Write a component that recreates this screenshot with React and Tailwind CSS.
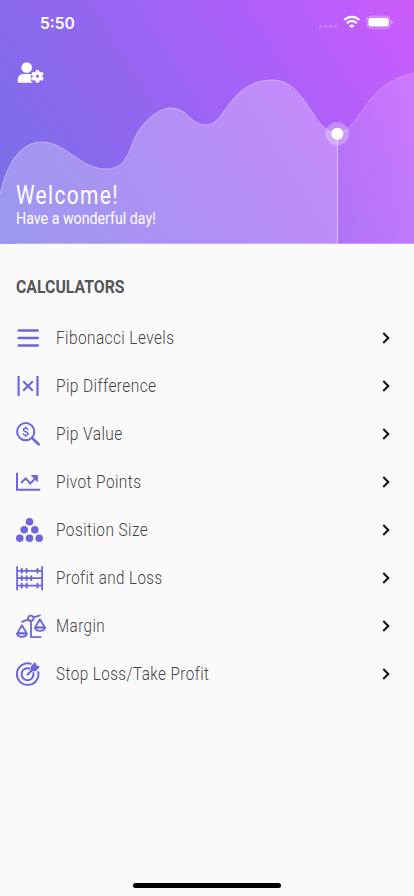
import React from "react";

const Icon = ({ children }) => (
  <svg viewBox="0 0 32 32" className="h-8 w-8 shrink-0" fill="none" stroke="#6C66DA" strokeWidth="2" strokeLinecap="round" strokeLinejoin="round">
    {children}
  </svg>
);

const Levels = () => (
  <Icon><path d="M2.6 8.5h19.2M2.6 16h19.2M2.6 23.5h19.2" strokeWidth="2.4" /></Icon>
);

const Difference = () => (
  <Icon><path d="M2.6 6v20M21.5 6v20M7.2 11.3l9.6 9.4M16.8 11.3l-9.6 9.4" strokeLinecap="butt" strokeWidth="2.2" /></Icon>
);

const Value = () => (
  <Icon>
    <circle cx="9.7" cy="13.7" r="8.6" />
    <path d="M16.3 20.2l6.4 6.2" strokeWidth="2.7" />
    <path d="M12 11.5c-.5-1-1.2-1.3-2.3-1.3-1.3 0-2.2.6-2.2 1.7 0 2.5 4.6 1.2 4.6 3.7 0 1.1-1 1.7-2.3 1.7-1.2 0-2.1-.5-2.5-1.5M9.7 8.9v1.3M9.7 17.3v1.3" strokeWidth="1.4" />
  </Icon>
);

const Pivot = () => (
  <Icon>
    <path d="M1 7.5v16.2h22.5" strokeLinejoin="miter" />
    <path d="M5.7 16.2l4-3.8 4.5 5.1 6-6" strokeLinejoin="miter" />
    <path d="M15.8 9.5h5.6v5.7z" fill="#6C66DA" strokeWidth="1" />
  </Icon>
);

const Position = () => (
  <Icon>
    <g fill="#6C66DA" stroke="none">
      <circle cx="13.5" cy="7.8" r="3.8" />
      <circle cx="8.2" cy="15.7" r="3.8" />
      <circle cx="18.8" cy="15.7" r="3.8" />
      <circle cx="3.8" cy="24.3" r="3.8" />
      <circle cx="13.5" cy="24.3" r="3.8" />
      <circle cx="23.2" cy="24.3" r="3.8" />
    </g>
  </Icon>
);

const Abacus = () => (
  <Icon>
    <path d="M1.1 5v22.6M26.1 5v22.6M1 8.8h25M1 16.2h25M1 23.7h25" strokeWidth="1.8" />
    <path d="M5.8 7v3.6M10.6 7v3.6M21.5 7v3.6M5.8 14.4V18M10.6 14.4V18M15.2 14.4V18M5.8 21.9v3.6M10.6 21.9v3.6M21.5 21.9v3.6" strokeWidth="2.1" />
  </Icon>
);

const Scales = () => (
  <Icon>
    <g strokeWidth="1.8">
      <circle cx="14.8" cy="8.3" r="2.7" />
      <path d="M6 11.8l6.2-2.4M17.4 7.3l6.5-2M15 11v16.2h9.7" />
      <path d="M5.9 15.2L1.4 23.1h9.2zM23.8 9.3l-4.5 8h9.4z" />
      <path d="M1 23.6c.6 4.2 9.3 4.2 9.9 0zM19 17.7c.6 4.2 9.4 4.2 10 0z" />
    </g>
  </Icon>
);

const Target = () => (
  <Icon>
    <path d="M14.7 5.7A10.8 10.8 0 1 0 22.3 14" />
    <path d="M13.7 10.6A6 6 0 1 0 17.4 14.9" />
    <path d="M11.6 16.5l6-6" strokeWidth="2.3" />
    <path d="M15.8 12.2V8.7l3.2-3.2.8 2.7 2.6.8-3.1 3.2z" fill="#6C66DA" />
  </Icon>
);

const rows = [
  { label: "Fibonacci Levels", icon: Levels, width: 118 },
  { label: "Pip Difference", icon: Difference, width: 100.5 },
  { label: "Pip Value", icon: Value, width: 67 },
  { label: "Pivot Points", icon: Pivot, width: 85.5 },
  { label: "Position Size", icon: Position, width: 92.5 },
  { label: "Profit and Loss", icon: Abacus, width: 107 },
  { label: "Margin", icon: Scales, width: 49 },
  { label: "Stop Loss/Take Profit", icon: Target, width: 153.5 },
];

// Narrows the regular Roboto face so the text fills the given width.
function Condensed({ width, className, children }) {
  const ref = React.useRef(null);
  const [scale, setScale] = React.useState(0.87);
  React.useLayoutEffect(() => {
    const fit = () => ref.current && setScale(width / ref.current.offsetWidth);
    fit();
    document.fonts.ready.then(fit);
  }, [width]);
  return (
    <span ref={ref} className={"inline-block origin-left whitespace-nowrap " + className} style={{ transform: `scaleX(${scale})` }}>
      {children}
    </span>
  );
}

const wave = "M0 195C7 161 22 142 42 142C66 142 80 169 106 169C131 169 128 143 142 126C152 114 162 108 171 108C188 108 190 125 206 125C226 125 229 80 273 80C306 80 313 133 337 133";
const tail = "M337 133C360 133 363 83 414 73";

function Header() {
  return (
    <header className="relative flex h-[244px] flex-col overflow-hidden bg-[linear-gradient(58deg,#7672e8_0%,#8d68ee_32%,#ab60f8_67%,#cc5bfc_100%)] text-white">
      <svg viewBox="0 0 414 244" className="absolute inset-0 h-full w-full" fill="none">
        <defs>
          <linearGradient id="shade" x1="337" x2="414" y1="0" y2="0" gradientUnits="userSpaceOnUse">
            <stop stopColor="#fff" stopOpacity=".11" />
            <stop offset="1" stopColor="#fff" stopOpacity=".17" />
          </linearGradient>
        </defs>
        <path d={wave + "V244H0Z"} fill="#fff" fillOpacity=".28" />
        <path d={tail + "V244H337Z"} fill="url(#shade)" />
        <path d={wave} stroke="#fff" strokeOpacity=".4" />
        <path d={tail} stroke="#fff" strokeOpacity=".28" />
        <path d="M337.5 134v110" stroke="#fff" strokeOpacity=".55" />
        <path d="M16 243.5h398" stroke="#fff" strokeOpacity=".25" />
        <circle cx="337.3" cy="133.8" r="11.7" fill="#fff" fillOpacity=".28" />
        <circle cx="337.3" cy="133.8" r="6.1" fill="#fff" />
      </svg>
      <div className="relative flex h-[46px] items-center justify-between pl-10 pr-5">
        <Condensed width={35} className="font-['Inter'] text-base font-semibold leading-none">5:50</Condensed>
        <svg viewBox="0 0 76 16" className="h-4 w-[76px]" fill="#fff">
          <g opacity=".22">
            <circle cx="2.5" cy="11.5" r="1.8" /><circle cx="7.7" cy="11.5" r="1.8" />
            <circle cx="12.8" cy="11.5" r="1.8" /><circle cx="17.8" cy="11.5" r="1.8" />
          </g>
          <g fill="none" stroke="#fff" strokeWidth="2.2">
            <path d="M26.3 4.9c4.4-4.1 10.6-4.1 15 0" />
            <path d="M28.9 8.1c2.9-2.7 6.9-2.7 9.8 0" />
          </g>
          <path d="M31.1 10.5c1.6-1.5 3.8-1.5 5.4 0l-2.7 2.8z" />
          <rect x="48.8" y="1.2" width="23.4" height="12" rx="3.6" fill="none" stroke="#fff" strokeOpacity=".42" />
          <rect x="50.4" y="2.8" width="20.3" height="8.8" rx="2.2" />
          <path d="M73.4 5.2c1.7.5 1.7 3.5 0 4z" opacity=".5" />
        </svg>
      </div>
      <svg viewBox="0 0 28 24" className="relative ml-[17px] mt-[14px] h-6 w-7 shrink-0" fill="#fff">
        <circle cx="9.7" cy="7.6" r="5.3" />
        <path d="M6.4 13.9h6.9l1.5.3-1.2 2.4 1.2 2.1-1 2.2 2 1.8H1.9c-.7 0-1.1-.5-1.1-1.1v-2.1c0-3.2 2.5-5.6 5.6-5.6z" />
        <path d="M19.1 10.3h2.8l.4 1.7 1.1.6 1.7-.6 1.4 2.4-1.3 1.2v1.5l1.3 1.1-1.4 2.4-1.7-.5-1.1.6-.4 1.7h-2.8l-.4-1.7-1.1-.6-1.7.5-1.4-2.4 1.3-1.1v-1.5l-1.3-1.2 1.4-2.4 1.7.6 1.1-.6zM20.5 14.5a1.8 1.8 0 1 0 0 3.6 1.8 1.8 0 0 0 0-3.6z" fillRule="evenodd" stroke="#fff" strokeWidth=".4" />
      </svg>
      <div className="relative mt-24 flex flex-col pl-4">
        <h1 className="h-[31px] leading-8"><Condensed width={103} className="font-['Roboto'] text-[25px] leading-8 tracking-[1.6px]">Welcome!</Condensed></h1>
        <p className="h-5 leading-4"><Condensed width={139.5} className="font-['Roboto'] text-base leading-4">Have a wonderful day!</Condensed></p>
      </div>
    </header>
  );
}

export default function App() {
  return (
    <main className="flex h-[896px] w-[414px] flex-col overflow-hidden bg-[#fbfafb] font-['Roboto',sans-serif] text-[#434244]">
      <Header />
      <h2 className="ml-4 mt-[31px] h-6 leading-6 text-[#565557]"><Condensed width={108.5} className="text-[17.5px] font-bold leading-6">CALCULATORS</Condensed></h2>
      <ul className="mt-[15px] flex flex-col">
        {rows.map(({ label, icon: Glyph, width }) => (
          <li key={label} className="flex h-12 items-center pl-4 pr-5">
            <Glyph />
            <div className="ml-2 flex-1 leading-6"><Condensed width={width} className="text-[18px] font-[350] leading-6 tracking-[0.5px]">{label}</Condensed></div>
            <svg viewBox="0 0 16 16" className="h-4 w-4" fill="none" stroke="#111" strokeWidth="2"><path d="M5.3 3l5 5-5 5" /></svg>
          </li>
        ))}
      </ul>
      <div className="mb-2 mt-auto h-[5px] w-[148px] self-center rounded-full bg-black" />
    </main>
  );
}
